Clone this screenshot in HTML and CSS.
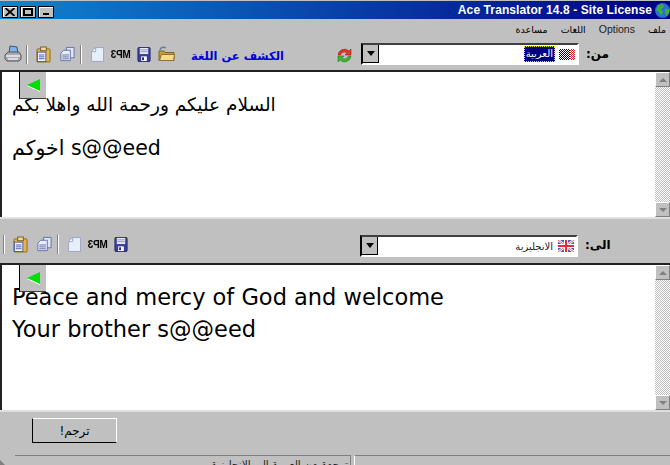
FILE: index.html
```html
<!DOCTYPE html>
<html lang="ar">
<head>
  <meta charset="UTF-8">
  <meta name="viewport" content="width=device-width, initial-scale=1.0">
  <title>Ace Translator</title>
  <link rel="stylesheet" href="styles.css">
</head>
<body>
  <svg class="defs" width="0" height="0">
    <symbol id="i-printer" viewBox="0 0 18 18">
      <path d="M6 1l7 1 1 7H5z" fill="#7fb4ea" stroke="#456" stroke-width="1"/>
      <path d="M1 10l3-3h11l2 3v4l-2 2H3l-2-2z" fill="#a9a9b4" stroke="#555" stroke-width="1"/>
      <path d="M2 11h14M4 14h10" stroke="#eee" stroke-width="1.4"/>
    </symbol>
    <symbol id="i-paste" viewBox="0 0 16 18">
      <rect x="1" y="3" width="14" height="14" rx="1" fill="#e3b543" stroke="#8a6a1c"/>
      <rect x="5" y="1" width="6" height="4" fill="#f3dc96" stroke="#6d5a24"/>
      <rect x="1.500" y="6.500" width="9" height="10" fill="#f2f5fb" stroke="#4c5a9e"/>
      <path d="M3 9.500h6M3 11.500h6M3 13.500h6" stroke="#4c5a9e"/>
    </symbol>
    <symbol id="i-copy" viewBox="0 0 16 18">
      <path d="M7.500 1.500h8v11h-8z" fill="#dfe5f3" stroke="#636fa8"/>
      <path d="M4.500 4.500h7v11h-10v-8z" fill="#e8edf7" stroke="#636fa8"/>
      <path d="M3 9.500h7M3 11.500h7M3 13.500h7" stroke="#636fa8"/>
    </symbol>
    <symbol id="i-new" viewBox="0 0 14 18">
      <path d="M5 1.500h8.500v15H.5V6z" fill="#e4effa" stroke="#9aa3c9"/>
      <path d="M5 1.500V6H.5z" fill="#fff" stroke="#9aa3c9"/>
    </symbol>
    <symbol id="i-save" viewBox="0 0 14 16">
      <path d="M.5 1.500a1 1 0 0 1 1-1h11a1 1 0 0 1 1 1v13a1 1 0 0 1-1 1h-11a1 1 0 0 1-1-1z" fill="#3c3f96" stroke="#25276e"/>
      <rect x="2.500" y="1" width="9" height="6.500" fill="#e8e9f5"/>
      <path d="M3 3h8M3 5h8" stroke="#8f92c8"/>
      <rect x="4" y="10" width="6" height="5" fill="#fff"/>
      <rect x="5" y="11" width="2" height="3" fill="#25276e"/>
    </symbol>
    <symbol id="i-open" viewBox="0 0 17 16">
      <path d="M1 5h5l1 1.500h9v8H1z" fill="#c89c3a" stroke="#7d6425"/>
      <path d="M1.500 14.500l2-6h13l-1 6z" fill="#f6dc8a" stroke="#8d7330"/>
      <path d="M2 4c1-3 4-3.500 6-2" fill="none" stroke="#5f86a8" stroke-width="1.500"/>
    </symbol>
    <symbol id="i-uk" viewBox="0 0 16 12">
      <rect width="16" height="12" fill="#4a5fa8"/>
      <path d="M0 0l16 12M16 0L0 12" stroke="#fff" stroke-width="2.500"/>
      <path d="M0 0l16 12M16 0L0 12" stroke="#e0606a" stroke-width="1"/>
      <path d="M8 0v12M0 6h16" stroke="#fff" stroke-width="4"/>
      <path d="M8 0v12M0 6h16" stroke="#e8283c" stroke-width="2"/>
    </symbol>
  </svg>

  <div class="window">
    <header class="titlebar">
      <div class="win-buttons">
        <span class="win-btn">
          <svg width="10" height="8" viewBox="0 0 10 8"><path d="M.5 0l9 8M9.500 0l-9 8" stroke="#000" stroke-width="1.800"/></svg>
        </span>
        <span class="win-btn">
          <svg width="10" height="8" viewBox="0 0 10 8"><rect x="1" y="1" width="8" height="6" fill="none" stroke="#000" stroke-width="2"/></svg>
        </span>
        <span class="win-btn win-btn-min"><i></i></span>
      </div>
      <span class="title">Ace Translator 14.8 - Site License</span>
      <svg class="globe" width="15" height="15" viewBox="0 0 15 15">
        <circle cx="7.500" cy="7.500" r="7.500" fill="#2a6fd0"/>
        <path d="M3 2l5-1 1 3-3 2 2 3-2 4-2-4-3-2zM10 6l4 0 0 4-3 3-1-3z" fill="#3cae3c"/>
      </svg>
    </header>

    <nav class="menubar">
      <span>ملف</span>
      <span class="menu-en">Options</span>
      <span>اللغات</span>
      <span>مساعدة</span>
    </nav>

    <div class="toolbar toolbar-from">
      <span class="tool"><svg width="18" height="18"><use href="#i-printer"/></svg></span>
      <span class="sep"></span>
      <span class="tool"><svg width="15" height="17"><use href="#i-paste"/></svg></span>
      <span class="tool"><svg width="16" height="17"><use href="#i-copy"/></svg></span>
      <span class="sep"></span>
      <span class="tool"><svg width="13" height="17"><use href="#i-new"/></svg></span>
      <span class="tool"><b class="mp3">MP3</b></span>
      <span class="tool"><svg width="14" height="15"><use href="#i-save"/></svg></span>
      <span class="tool"><svg width="17" height="16"><use href="#i-open"/></svg></span>
      <span class="detect">الكشف عن اللغة</span>
      <svg class="refresh" width="17" height="17" viewBox="0 0 17 17">
        <path d="M2 8a6.500 6.500 0 0 1 11-4l2-2v6h-6l2-2a4 4 0 0 0-6.500 2z" fill="#e0392c" stroke="#a32018" stroke-width=".6"/>
        <path d="M15 9a6.500 6.500 0 0 1-11 4l-2 2V9h6l-2 2a4 4 0 0 0 6.500-2z" fill="#43b43a" stroke="#257a20" stroke-width=".6"/>
      </svg>
      <div class="combo">
        <span class="combo-arrow"><i></i></span>
        <span class="combo-value">
          <span class="lang-selected">العربية</span>
          <span class="flag-dither"><i></i></span>
        </span>
      </div>
      <label class="combo-label">من:</label>
    </div>

    <div class="pane pane-from">
      <div class="editor">
        <span class="pin"><i></i></span>
        <p class="ar-first">السلام عليكم ورحمة الله واهلا بكم</p>
        <p class="ar-second">s@@eed اخوكم</p>
      </div>
      <div class="scrollbar">
        <span class="sb-btn"><i class="up"></i></span>
        <span class="sb-track"></span>
        <span class="sb-btn"><i class="down"></i></span>
      </div>
    </div>

    <div class="toolbar toolbar-to">
      <span class="sep"></span>
      <span class="tool"><svg width="15" height="17"><use href="#i-paste"/></svg></span>
      <span class="tool"><svg width="16" height="17"><use href="#i-copy"/></svg></span>
      <span class="sep"></span>
      <span class="tool"><svg width="13" height="17"><use href="#i-new"/></svg></span>
      <span class="tool"><b class="mp3">MP3</b></span>
      <span class="tool"><svg width="14" height="15"><use href="#i-save"/></svg></span>
      <div class="combo">
        <span class="combo-arrow"><i></i></span>
        <span class="combo-value">
          <span class="lang">الانجليزية</span>
          <svg width="16" height="12"><use href="#i-uk"/></svg>
        </span>
      </div>
      <label class="combo-label">الى:</label>
    </div>

    <div class="pane pane-to">
      <div class="editor">
        <span class="pin"><i></i></span>
        <p class="en">Peace and mercy of God and welcome</p>
        <p class="en">Your brother s@@eed</p>
      </div>
      <div class="scrollbar">
        <span class="sb-btn"><i class="up"></i></span>
        <span class="sb-track"></span>
        <span class="sb-btn"><i class="down"></i></span>
      </div>
    </div>

    <div class="actions">
      <button type="button" class="translate">ترجم!</button>
    </div>

    <footer class="statusbar">
      <span class="status-main">ترجمة من العربية الى الانجليزية</span>
      <span class="status-rest"></span>
      <span class="grip"></span>
    </footer>
  </div>
</body>
</html>
```

FILE: styles.css
```css
html, body {
  margin: 0;
  height: 465px;
  overflow: hidden;
}

body {
  background: #c0c0c0;
  font-family: "DejaVu Sans", sans-serif;
  color: #000;
}

.defs {
  display: block;
  height: 0;
}

.window {
  width: 670px;
  height: 465px;
  overflow: hidden;
}

/* title bar */
.titlebar {
  height: 18px;
  border-top: 1px solid #c0c0c0;
  background: linear-gradient(to right, #1084d0, #000080);
  display: flex;
  align-items: center;
  padding-left: 2px;
}

.win-buttons {
  display: flex;
  gap: 2px;
  margin-top: 3px;
}

.win-btn {
  width: 16px;
  height: 12px;
  box-sizing: border-box;
  background: #c0c0c0;
  border: 1px solid #000;
  box-shadow: inset 1px 1px 0 #fff;
  display: flex;
  align-items: center;
  justify-content: center;
}

.win-btn-min i {
  width: 6px;
  height: 2px;
  background: #000;
  margin-top: 5px;
}

.title {
  margin-left: auto;
  color: #fff;
  font: bold 12px "Liberation Sans", sans-serif;
  letter-spacing: .1px;
  white-space: nowrap;
}

.globe {
  margin: 0 0 0 3px;
  flex: none;
}

/* menu */
.menubar {
  height: 19px;
  display: flex;
  direction: rtl;
  gap: 13px;
  padding-right: 4px;
  align-items: center;
  font-size: 9.500px;
  padding-top: 1px;
  box-sizing: border-box;
}

.menu-en {
  font-family: "Liberation Sans", sans-serif;
  font-size: 10.500px;
  color: #222;
}

/* toolbars */
.toolbar {
  display: flex;
  align-items: center;
  box-sizing: border-box;
}

.toolbar-from {
  height: 32px;
  padding-left: 1px;
}

.toolbar-to {
  height: 44px;
  padding-left: 1px;
  padding-top: 7px;
}

.tool {
  width: 23px;
  height: 20px;
  flex: none;
  display: flex;
  align-items: center;
  justify-content: center;
}

.sep {
  height: 19px;
  flex: none;
  box-sizing: border-box;
  border-left: 1px solid #808080;
  box-shadow: inset 1px 0 0 #fff;
  margin-left: 2px;
  width: 6px;
}

.mp3 {
  font: bold 10px "Liberation Sans", sans-serif;
  transform: scaleX(-1);
  letter-spacing: -.3px;
}

.detect {
  margin-left: 12px;
  margin-top: 3px;
  width: 95px;
  color: #0000e0;
  font-size: 11.500px;
  white-space: nowrap;
  font-weight: bold;
  text-align: center;
}

.refresh {
  margin-left: 51px;
  margin-top: 2px;
  flex: none;
}

.combo {
  width: 218px;
  height: 22px;
  box-sizing: border-box;
  background: #fff;
  border: 2px solid #000;
  border-right-color: #fff;
  border-bottom-color: #fff;
  border-top-color: #404040;
  display: flex;
  flex: none;
}

.toolbar-from .combo {
  margin-left: 8px;
}

.toolbar-to .combo {
  margin-left: 228px;
  margin-top: 3px;
}

.combo-arrow {
  width: 15px;
  background: #c0c0c0;
  border-right: 1px solid #000;
  border-bottom: 1px solid #000;
  display: flex;
  align-items: center;
  justify-content: center;
  flex: none;
}

.combo-arrow i {
  border: 4px solid transparent;
  border-top: 5px solid #000;
  border-bottom: 0;
}

.combo-value {
  flex: 1;
  display: flex;
  align-items: center;
  justify-content: flex-end;
  gap: 4px;
  padding-right: 2px;
  font-size: 10px;
}

.lang-selected {
  background: #000080;
  color: #fff;
  outline: 1px dotted #e8e800;
  outline-offset: -1px;
  padding: 1px 2px;
  line-height: 14px;
}

.lang {
  color: #222;
  margin-right: 1px;
}

.flag-dither {
  width: 16px;
  height: 11px;
  display: flex;
  justify-content: flex-end;
  background: repeating-conic-gradient(#000080 0 25%, #fff 0 50%) 0 0 / 2px 2px;
}

.flag-dither i {
  width: 5px;
  background: repeating-conic-gradient(#d02030 0 25%, #fff 0 50%) 0 0 / 2px 2px;
}

.combo-label {
  margin-left: 7px;
  font-size: 12px;
  font-weight: bold;
  white-space: nowrap;
  direction: rtl;
}

/* text panes */
.pane {
  display: flex;
  height: 145px;
  background: #fff;
  border-top: 2px solid #222;
  border-bottom: 2px solid #dfdfdf;
}

.editor {
  position: relative;
  flex: 1;
  border-left: 2px solid #222;
  padding: 17px 0 0 10px;
  overflow: hidden;
}

.pane-to .editor {
  padding-top: 16px;
}

.editor p {
  margin: 0;
  font-size: 20.500px;
  line-height: 32px;
  white-space: nowrap;
}

.editor .ar-first {
  font-size: 18.500px;
  direction: rtl;
  width: fit-content;
}

.editor .ar-second {
  margin-top: 11px;
  direction: rtl;
  width: fit-content;
}

.editor .en {
  font-size: 22.500px;
}

.pin {
  position: absolute;
  left: 17px;
  top: 0;
  width: 26px;
  height: 26px;
  background: #c0c0c0;
  border-left: 1px solid #000;
  border-bottom: 1px solid #404040;
  display: flex;
  align-items: center;
  justify-content: center;
}

.pin i {
  border: 6px solid transparent;
  border-left: 0;
  border-right: 13px solid #00e000;
  filter: drop-shadow(0 1px 0 #fff);
}

.scrollbar {
  width: 15px;
  display: flex;
  flex-direction: column;
  flex: none;
}

.sb-btn {
  height: 15px;
  box-sizing: border-box;
  background: #c0c0c0;
  border: 1px solid #808080;
  border-top-color: #fff;
  border-left-color: #fff;
  display: flex;
  align-items: center;
  justify-content: center;
}

.sb-btn .up {
  border: 4px solid transparent;
  border-top: 0;
  border-bottom: 4px solid #808080;
}

.sb-btn .down {
  border: 4px solid transparent;
  border-bottom: 0;
  border-top: 4px solid #808080;
}

.sb-track {
  flex: 1;
  background: repeating-conic-gradient(#c0c0c0 0 25%, #fff 0 50%) 0 0 / 2px 2px;
}

/* bottom */
.actions {
  height: 43px;
  padding: 6px 0 0 32px;
  box-sizing: border-box;
}

.translate {
  width: 85px;
  height: 25px;
  background: #c0c0c0;
  border: 1px solid #000;
  border-top-color: #fff;
  border-right-color: #fff;
  font: 12px "DejaVu Sans", sans-serif;
  direction: rtl;
  padding: 0;
}

.statusbar {
  position: relative;
  display: flex;
  height: 10px;
  padding-left: 15px;
}

.status-main {
  width: 333px;
  border-top: 1px solid #808080;
  border-right: 1px solid #808080;
  font-size: 10.500px;
  line-height: 17px;
  padding-right: 2px;
  direction: rtl;
  white-space: nowrap;
  overflow: hidden;
  color: #222;
}

.status-rest {
  flex: 1;
  margin-left: 3px;
  border-top: 1px solid #808080;
  border-left: 1px solid #fff;
}

.grip {
  position: absolute;
  left: 0;
  bottom: 0;
  border-left: 5px solid #808080;
  border-top: 5px solid transparent;
}
```
